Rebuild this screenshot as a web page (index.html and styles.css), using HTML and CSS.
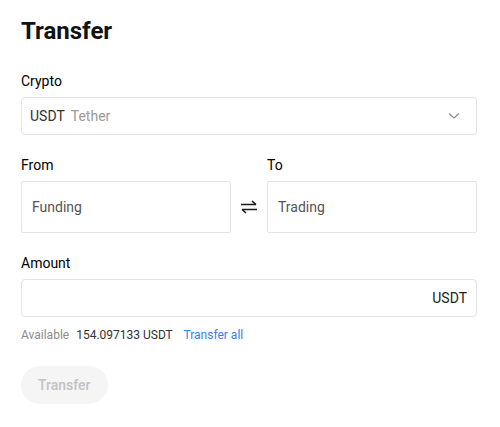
FILE: index.html
```html
<!DOCTYPE html>
<html>
<head>
    <title>Transfer</title>
    <meta charset="UTF-8">
    <meta name="viewport" content="width=device-width, initial-scale=1.0">
    <link rel="stylesheet" href="styles.css">
</head>
<body>
    <div class="panel">
        <h1 class="title">Transfer</h1>

        <div class="field">
            <label class="label">Crypto</label>
            <div class="select">
                <span class="coin">USDT</span>
                <span class="coin-name">Tether</span>
                <svg class="chevron" width="12" height="8" viewBox="0 0 12 8">
                    <path d="M1 1.5 L6 6 L11 1.5" fill="none" stroke="#8a8a8a" stroke-width="1.2"/>
                </svg>
            </div>
        </div>

        <div class="accounts">
            <div class="account">
                <label class="label">From</label>
                <div class="account-box">Funding</div>
            </div>
            <div class="swap">
                <svg width="18" height="14" viewBox="0 0 18 14">
                    <path d="M1 4.5 H16 M12 1 L16 4.5" fill="none" stroke="#1a1a1a" stroke-width="1.6"/>
                    <path d="M17 9.5 H2 M6 13 L2 9.5" fill="none" stroke="#1a1a1a" stroke-width="1.6"/>
                </svg>
            </div>
            <div class="account">
                <label class="label">To</label>
                <div class="account-box">Trading</div>
            </div>
        </div>

        <div class="field">
            <label class="label">Amount</label>
            <div class="amount">
                <span class="unit">USDT</span>
            </div>
        </div>

        <div class="available">
            <span class="muted">Available</span>
            <span class="balance">154.097133 USDT</span>
            <a class="link" href="#">Transfer all</a>
        </div>

        <button class="submit" disabled>Transfer</button>
    </div>
</body>
</html>
```

FILE: styles.css
```css
/* Basic Reset */
* {
    box-sizing: border-box;
    margin: 0;
    padding: 0;
    font-family: 'Roboto', 'Noto Sans', sans-serif;
}

body {
    background-color: #ffffff;
    color: #121212;
}

.panel {
    padding: 16px 23px 0 21px;
}

/* Title */
.title {
    font-size: 24px;
    font-weight: 700;
    line-height: 30px;
    margin-bottom: 25px;
}

.label {
    display: block;
    font-size: 14px;
    font-weight: 400;
    color: #000;
    line-height: 20px;
    margin-bottom: 6px;
}

.field {
    margin-bottom: 20px;
}

/* Crypto select */
.select {
    display: flex;
    align-items: center;
    height: 38px;
    padding: 0 16px 0 8px;
    border: 1px solid #e3e3e3;
    border-radius: 4px;
    font-size: 14px;
}

.coin {
    color: #333;
}

.coin-name {
    color: #9a9a9a;
    margin-left: 6px;
}

.chevron {
    margin-left: auto;
}

/* From / To */
.accounts {
    display: flex;
    align-items: flex-end;
    margin-bottom: 20px;
}

.account {
    flex: 1;
}

.account-box {
    display: flex;
    align-items: center;
    height: 52px;
    padding: 0 10px;
    border: 1px solid #e3e3e3;
    border-radius: 2px;
    font-size: 14px;
    color: #555;
}

.swap {
    width: 36px;
    height: 52px;
    display: flex;
    align-items: center;
    justify-content: center;
}

/* Amount */
.amount {
    display: flex;
    align-items: center;
    justify-content: flex-end;
    height: 38px;
    padding: 0 9px;
    border: 1px solid #e3e3e3;
    border-radius: 4px;
    font-size: 14px;
}

.unit {
    color: #222;
}

.field + .available {
    margin-top: -10px;
}

.available {
    font-size: 12px;
    line-height: 16px;
}

.muted {
    color: #8c8c8c;
}

.balance {
    color: #333;
    margin-left: 4px;
}

.link {
    color: #3a7bf2;
    text-decoration: none;
    margin-left: 8px;
}

/* Button */
.submit {
    margin-top: 23px;
    height: 38px;
    padding: 0 17px;
    background-color: #f5f5f5;
    color: #c2c2c2;
    border: none;
    border-radius: 19px;
    font-size: 14px;
    font-weight: 500;
}
```
